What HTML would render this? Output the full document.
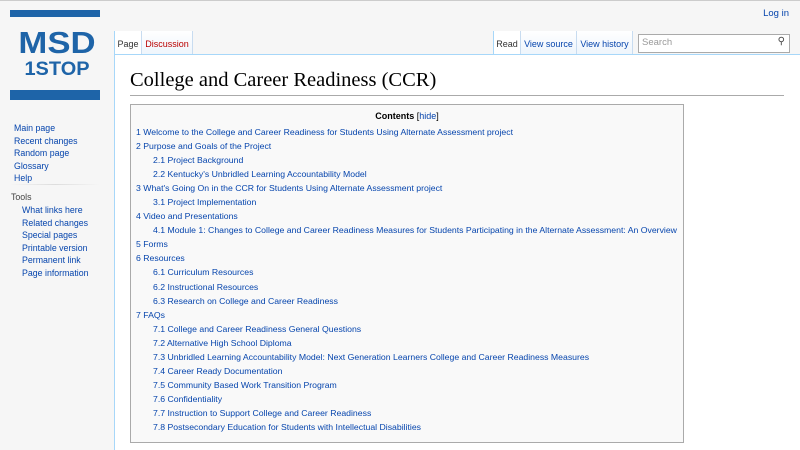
<!DOCTYPE html>
<html><head><meta charset="utf-8"><style>
*{margin:0;padding:0;box-sizing:border-box}
body{width:800px;height:450px;overflow:hidden;background:#f6f6f6;font-family:"Liberation Sans",sans-serif;position:relative;border-top:1px solid #ccc}
a{color:#0645ad;text-decoration:none}
.bar{position:absolute;left:10px;width:90px;background:#1e64a8}
.logo{position:absolute;left:0;width:114px;text-align:center;color:#1e64a8;font-weight:bold}
.content{position:absolute;left:114px;top:53px;right:0;bottom:0;background:#fff;border-left:1px solid #a7d7f9;border-top:1px solid #a7d7f9}
.tab{position:absolute;top:30px;height:23px;font-size:9px;padding:8px 0 0;text-align:center;white-space:nowrap;background:linear-gradient(#fff,#eef5fc);border-right:1px solid #c8dcf0}
h1{position:absolute;left:130px;top:66px;width:654px;font-family:"Liberation Serif",serif;font-weight:normal;font-size:20.5px;color:#000;border-bottom:1px solid #aaa;padding-bottom:2px;line-height:26px}
.toc{position:absolute;left:130px;top:103px;width:554px;height:339px;background:#f9f9f9;border:1px solid #aaa;font-size:8.7px}
.toc .t{text-align:center;font-weight:bold;font-size:9px;margin-top:6px;color:#000}
.toc .t span{font-weight:normal}
.toc ul{list-style:none;position:absolute;left:5px;top:20px}
.toc li{height:14.05px;line-height:14.05px;white-space:nowrap}
.toc li.s{padding-left:17px}
.side{position:absolute;left:14px;font-size:8.8px;line-height:12.6px}
.side a{display:block}
</style></head><body>
<div class="bar" style="top:9px;height:7px"></div>
<div class="logo" style="top:24px;font-size:31px;transform:scaleX(1.12)">MSD</div>
<div class="logo" style="top:58px;font-size:19px;transform:scaleX(1.05)">1STOP</div>
<div class="bar" style="top:89px;height:10px"></div>
<a style="position:absolute;right:11px;top:7px;font-size:9.5px">Log in</a>
<div class="content"></div>
<div class="tab" style="left:114px;width:28px;color:#333;background:#fff;border-left:1px solid #a7d7f9">Page</div>
<div class="tab" style="left:142px;width:51px;color:#ba0000">Discussion</div>
<div class="tab" style="left:493px;width:28px;color:#333;background:#fff;border-left:1px solid #a7d7f9">Read</div>
<div class="tab" style="left:521px;width:56px"><a>View source</a></div>
<div class="tab" style="left:577px;width:56px"><a>View history</a></div>
<div style="position:absolute;left:638px;top:33px;width:152px;height:19px;border:1px solid #aaa;background:#fff;font-size:9.5px;color:#999;padding:2px 3px">Search<span style="position:absolute;right:4px;top:1px;color:#444;font-size:10px">&#9906;</span></div>
<h1>College and Career Readiness (CCR)</h1>
<div class="side" style="top:121px"><a>Main page</a><a>Recent changes</a><a>Random page</a><a>Glossary</a><a>Help</a></div>
<div style="position:absolute;left:10px;top:183px;width:90px;height:1px;background:linear-gradient(90deg,#f6f6f6,#ddd,#f6f6f6)"></div>
<div class="side" style="top:190px;left:11px;color:#444">Tools</div>
<div class="side" style="top:203px;left:22px"><a>What links here</a><a>Related changes</a><a>Special pages</a><a>Printable version</a><a>Permanent link</a><a>Page information</a></div>
<div class="toc"><div class="t">Contents <span>[<a>hide</a>]</span></div>
<ul>
<li><a>1 Welcome to the College and Career Readiness for Students Using Alternate Assessment project</a></li>
<li><a>2 Purpose and Goals of the Project</a></li>
<li class="s"><a>2.1 Project Background</a></li>
<li class="s"><a>2.2 Kentucky's Unbridled Learning Accountability Model</a></li>
<li><a>3 What's Going On in the CCR for Students Using Alternate Assessment project</a></li>
<li class="s"><a>3.1 Project Implementation</a></li>
<li><a>4 Video and Presentations</a></li>
<li class="s"><a>4.1 Module 1: Changes to College and Career Readiness Measures for Students Participating in the Alternate Assessment: An Overview</a></li>
<li><a>5 Forms</a></li>
<li><a>6 Resources</a></li>
<li class="s"><a>6.1 Curriculum Resources</a></li>
<li class="s"><a>6.2 Instructional Resources</a></li>
<li class="s"><a>6.3 Research on College and Career Readiness</a></li>
<li><a>7 FAQs</a></li>
<li class="s"><a>7.1 College and Career Readiness General Questions</a></li>
<li class="s"><a>7.2 Alternative High School Diploma</a></li>
<li class="s"><a>7.3 Unbridled Learning Accountability Model: Next Generation Learners College and Career Readiness Measures</a></li>
<li class="s"><a>7.4 Career Ready Documentation</a></li>
<li class="s"><a>7.5 Community Based Work Transition Program</a></li>
<li class="s"><a>7.6 Confidentiality</a></li>
<li class="s"><a>7.7 Instruction to Support College and Career Readiness</a></li>
<li class="s"><a>7.8 Postsecondary Education for Students with Intellectual Disabilities</a></li>
</ul></div>
</body></html>
